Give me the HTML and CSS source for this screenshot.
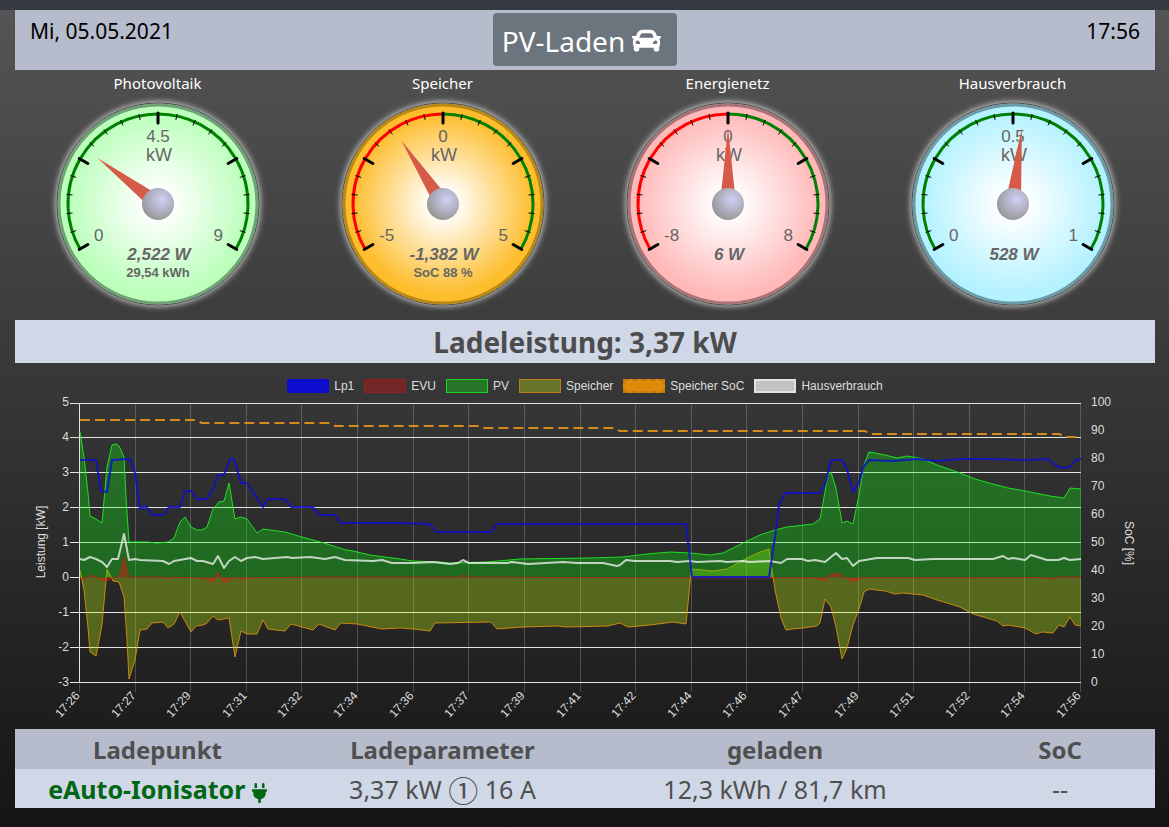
FILE: index.html
```html
<!DOCTYPE html>
<html lang="de">
<head>
<meta charset="utf-8">
<meta name="viewport" content="width=device-width, initial-scale=1">
<title>PV-Laden</title>
<link rel="stylesheet" href="styles.css">
</head>
<body>
<div class="navbar"></div>
<main class="page">
  <header class="topbar">
    <span class="date">Mi, 05.05.2021</span>
    <button type="button" class="mode">PV-Laden
      <svg class="car" viewBox="0 0 512 512" aria-hidden="true"><path d="M499.99 176h-59.87l-16.64-41.6C406.38 91.63 365.57 64 319.5 64h-127c-46.06 0-86.88 27.63-103.99 70.4L71.87 176H12.01C4.2 176-1.53 183.34.37 190.91l6 24C7.7 220.25 12.5 224 18.01 224h20.07C24.65 235.73 16 252.78 16 272v48c0 16.12 6.16 30.67 16 41.93V416c0 17.67 14.33 32 32 32h32c17.67 0 32-14.33 32-32v-32h256v32c0 17.67 14.33 32 32 32h32c17.67 0 32-14.33 32-32v-54.07c9.84-11.25 16-25.8 16-41.93v-48c0-19.22-8.65-36.27-22.07-48H494c5.51 0 10.31-3.75 11.64-9.09l6-24c1.89-7.57-3.84-14.91-11.65-14.91zm-352.06-17.83c7.29-18.22 24.94-30.17 44.57-30.17h127c19.63 0 37.28 11.95 44.57 30.17L384 208H128l19.93-49.83zM96 319.8c-19.2 0-32-12.76-32-31.9S76.8 256 96 256s48 28.71 48 47.85-28.8 15.95-48 15.95zm320 0c-19.2 0-48 3.19-48-15.95S396.8 256 416 256s32 12.76 32 31.9-12.8 31.9-32 31.9z"/></svg>
    </button>
    <span class="time">17:56</span>
  </header>

  <section class="gauges" id="gauges"></section>

  <h1 class="power">Ladeleistung: 3,37 kW</h1>

  <section class="chart">
    <ul class="legend">
      <li><i class="box lp1"></i>Lp1</li>
      <li><i class="box evu"></i>EVU</li>
      <li><i class="box pv"></i>PV</li>
      <li><i class="box speicher"></i>Speicher</li>
      <li><i class="box soc"></i>Speicher SoC</li>
      <li><i class="box haus"></i>Hausverbrauch</li>
    </ul>
    <svg class="plot" id="plot" viewBox="15 393 1140 336" role="img" aria-label="Leistungsverlauf"></svg>
  </section>

  <table class="points">
    <colgroup><col class="c3"><col class="c3"><col class="c4"><col class="c2"></colgroup>
    <thead><tr><th>Ladepunkt</th><th>Ladeparameter</th><th>geladen</th><th>SoC</th></tr></thead>
    <tbody><tr>
      <td class="name">eAuto-Ionisator <svg class="plug" viewBox="0 0 384 512" aria-hidden="true"><path d="M320,32a32,32,0,0,0-64,0v96h64Zm48,128H16A16,16,0,0,0,0,176v32a16,16,0,0,0,16,16H32v32A160.07,160.07,0,0,0,160,412.8V512h64V412.8A160.07,160.07,0,0,0,352,256V224h16a16,16,0,0,0,16-16V176A16,16,0,0,0,368,160ZM128,32a32,32,0,0,0-64,0v96h64Z"/></svg></td>
      <td>3,37 kW <span class="phase">①</span> 16 A</td>
      <td>12,3 kWh / 81,7 km</td>
      <td>--</td>
    </tr></tbody>
  </table>
</main>
<script src="app.js"></script>
</body>
</html>
```

FILE: styles.css
```css
* { box-sizing: border-box; }

body {
  margin: 0;
  min-height: 100vh;
  background: linear-gradient(#555, #151515);
  font-family: "Noto Sans", "Open Sans", sans-serif;
  color: #fff;
}

.navbar { height: 10px; background: #343a40; }
.page { padding: 0 14px 0 15px; }

.topbar {
  display: grid;
  grid-template-columns: 1fr auto 1fr;
  align-items: start;
  height: 60px;
  padding: 3px 15px;
  background: #b6bccc;
  color: #000;
  font-size: 21px;
  line-height: 36px;
}
.time { text-align: right; }
.mode {
  display: flex;
  align-items: center;
  gap: 7px;
  height: 53px;
  padding: 2px 16px 0 9px;
  border: 0;
  border-radius: 4px;
  background: #6c757d;
  color: #fff;
  font-family: inherit;
  font-size: 28px;
}
.car { width: 29px; height: 29px; fill: currentColor; }

.gauges {
  display: grid;
  grid-template-columns: repeat(4, 1fr);
  height: 250px;
}
.gauge { margin: 0; text-align: center; }
.gauge figcaption { font-size: 15px; line-height: 23px; padding-top: 2px; }
.dial { display: block; width: 240px; height: 220px; margin: 0 auto; }
.dial text { font-family: "Liberation Sans", Arial, sans-serif; fill: #666; font-size: 17px; }
.dial .unit { font-size: 18px; }
.dial .value { font-size: 17px; font-weight: bold; font-style: italic; }
.dial .sub { font-size: 13px; font-weight: bold; }
.mid { text-anchor: middle; }

.power {
  margin: 0;
  padding-top: 1px;
  background: #d0d7e7;
  color: #4c4c4c;
  text-align: center;
  font-size: 28px;
  line-height: 42px;
}

.legend {
  display: flex;
  flex-wrap: wrap;
  justify-content: center;
  gap: 10px;
  margin: 0;
  padding: 16px 0 0;
  list-style: none;
  font: 12px/14px "Liberation Sans", Arial, sans-serif;
  color: #ddd;
}
.legend li { display: flex; align-items: center; gap: 5px; }
.box { width: 42px; height: 14px; border: 1px solid; }
.lp1 { background: #0d0dcf; border-color: #0d0dcf; }
.evu { background: #732626; border-color: #941f20; }
.pv { background: #277527; border-color: #1fd422; }
.speicher { background: #67762a; border-color: #b77b17; }
.soc { background: #e08a0a; border: 2px dashed #c27a10; }
.haus { background: #c2c2c2; border: 2px solid #e2e2e2; }

.plot { display: block; width: 100%; height: auto; }
.plot text { font-family: "Liberation Sans", Arial, sans-serif; font-size: 12px; fill: #ddd; }
.plot path { fill: none; stroke-linejoin: round; }
.plot .area { stroke: none; }
.end { text-anchor: end; }
.grid-y { stroke: #e4e4e4; }
.grid-x { stroke: #fff; stroke-opacity: 0.2; }

.points { width: 100%; table-layout: fixed; border-collapse: collapse; color: #4f4f4f; text-align: center; }
.c3 { width: 25%; }
.c4 { width: 33.33%; }
.c2 { width: 16.67%; }
.points th { height: 40px; padding: 2px 0 0; background: #b6bccc; font-size: 24px; line-height: 38px; }
.points td { height: 39px; padding: 2px 0 0; background: #d0d7e7; font-size: 25px; line-height: 37px; }
.points .name { color: #006614; font-weight: bold; }
.plug { width: 15px; height: 20px; fill: currentColor; vertical-align: -4px; }
.phase { font-family: "Noto Sans CJK JP", sans-serif; font-size: 30px; line-height: 1; vertical-align: -3px; }
```

FILE: app.js
```js
const polar = (angle, r) => {
  const a = angle * Math.PI / 180;
  return [(120 + r * Math.sin(a)).toFixed(2), (109 - r * Math.cos(a)).toFixed(2)];
};

const gauges = [
  { title: "Photovoltaik", mid: "4.5", min: "0", max: "9", at: 2.522 / 9, text: "2,522 W", sub: "29,54 kWh", edge: "#bbffbb", ring: "#6fa274", left: "green" },
  { title: "Speicher", mid: "0", min: "-5", max: "5", at: 3.618 / 10, text: "-1,382 W", sub: "SoC 88 %", edge: "#fdbd2c", ring: "#b98815", left: "red" },
  { title: "Energienetz", mid: "0", min: "-8", max: "8", at: 0.5, text: "6 W", sub: "", edge: "#ffb9b9", ring: "#a97477", left: "red" },
  { title: "Hausverbrauch", mid: "0.5", min: "0", max: "1", at: 0.528, text: "528 W", sub: "", edge: "#b4f2ff", ring: "#6a9ba6", left: "green" }
];

function dial(g, i) {
  let ticks = "";
  for (let a = -120; a <= 120; a += 12) {
    if (a % 60 === 0) continue;
    ticks += `<path d="M${polar(a, 92)}L${polar(a, 86)}" stroke="#000" stroke-width="1"/>`;
  }
  for (let a = -120; a <= 120; a += 60) {
    ticks += `<path d="M${polar(a, 91)}L${polar(a, 81)}" stroke="#000" stroke-width="3" stroke-linecap="round"/>`;
  }
  const arc = (from, to, color) =>
    `<path d="M${polar(from, 90)}A90 90 0 0 1 ${polar(to, 90)}" fill="none" stroke="${color}" stroke-width="3"/>`;
  const angle = g.at * 240 - 120;
  return `<figure class="gauge"><figcaption>${g.title}</figcaption>
  <svg class="dial" viewBox="0 0 240 220">
    <defs>
      <radialGradient id="face${i}"><stop offset="0" stop-color="#fff"/><stop offset=".12" stop-color="#fff"/><stop offset=".92" stop-color="${g.edge}"/></radialGradient>
      <radialGradient id="hub${i}" cx=".62" cy=".36" r=".65"><stop offset="0" stop-color="#d0d0f8"/><stop offset="1" stop-color="#989898"/></radialGradient>
      <filter id="glow${i}" x="-10%" y="-10%" width="120%" height="120%"><feGaussianBlur stdDeviation="3"/></filter>
    </defs>
    <circle cx="120" cy="109" r="102" fill="#ddd" filter="url(#glow${i})"/>
    <circle cx="120" cy="109" r="101" fill="#b5b5b5" stroke="#4a4a4a"/>
    <circle cx="120" cy="109" r="99" fill="url(#face${i})" stroke="${g.ring}" stroke-width="3"/>
    ${arc(-120, 0, g.left)}${arc(0, 120, "green")}${ticks}
    <text class="mid" x="120" y="47">${g.mid}</text>
    <text class="mid unit" x="121" y="66">kW</text>
    <text x="56" y="146">${g.min}</text>
    <text class="end" x="185" y="146">${g.max}</text>
    <text class="mid value" x="121" y="165">${g.text}</text>
    <text class="mid sub" x="120" y="182">${g.sub}</text>
    <path d="M112 109L120 33L128 109Z" fill="#d65a48" transform="rotate(${angle.toFixed(1)} 120 109)"/>
    <circle cx="120" cy="109" r="16" fill="url(#hub${i})"/>
  </svg></figure>`;
}
document.getElementById("gauges").innerHTML = gauges.map(dial).join("");

const zero = 577.5;
const series = [
  { name: "soc", stroke: "#d58a1c", width: 2, dash: "10 5",
    points: "80,420 195,420 202,423 329,423 335,426 478,426 484,428 613,428 620,431 865,431 870,434 1059,434 1066,437 1081,437" },
  { name: "speicher", stroke: "rgba(224,148,13,.85)", width: 1, fill: "rgba(200,255,13,.3)",
    points: "80,570 84,590 88,628 90,652 96,656 102,625 107,569 113,581 119,582 124,597 127,640 129,679 135,660 140,630 147,629 152,623 163,622 168,628 174,624 180,612 191,632 196,626 203,625 207,623 213,616 218,620 229,618 235,657 241,631 247,634 257,634 263,620 268,629 285,631 291,624 313,630 319,624 335,630 341,623 357,624 382,629 400,628 413,629 430,631 435,623 491,622 497,629 523,627 557,626 567,627 608,626 620,623 628,627 650,625 673,622 686,624 691,573 692,569 713,571 727,569 747,558 760,552 769,549 771,563 775,590 781,618 786,630 792,629 803,628 817,626 820,623 825,599 831,607 836,627 842,659 847,648 853,625 859,609 864,592 869,589 885,591 895,594 903,593 923,595 937,600 960,607 973,614 980,616 997,621 1003,626 1008,625 1025,628 1036,634 1042,632 1053,633 1059,625 1064,627 1070,617 1075,625 1081,626" },
  { name: "pv", stroke: "rgba(30,240,34,.9)", width: 1, fill: "rgba(10,255,13,.3)",
    points: "80,432 84,457 88,493 90,516 96,519 102,523 107,467 112,445 116,444 119,446 124,457 126,497 129,542 147,542 157,543 168,542 174,538 180,522 185,517 191,527 197,530 202,530 207,527 213,509 219,502 224,501 229,483 235,519 241,517 247,519 257,533 263,529 285,532 302,537 324,543 346,550 353,551 370,555 400,559 413,561 440,562 450,563 487,562 520,559 590,558 623,557 647,554 670,552 690,553 710,555 723,553 747,541 760,535 775,530 787,527 813,524 820,519 825,492 828,474 831,472 836,488 842,523 847,521 853,524 859,495 864,465 869,452 875,453 885,455 897,458 907,456 923,459 937,465 960,473 975,479 993,484 1008,488 1025,491 1050,496 1064,498 1070,488 1081,489" },
  { name: "haus", stroke: "rgba(255,255,255,.72)", width: 2,
    points: "80,559 84,560 90,557 96,559 102,562 107,567 112,559 118,559 124,534 129,560 135,559 140,560 163,561 169,564 174,561 191,558 197,561 203,561 213,564 218,556 224,568 229,561 235,557 241,561 247,558 255,557 263,559 287,557 292,558 310,557 325,559 335,557 345,560 373,561 382,560 392,563 413,563 433,562 450,564 458,563 463,560 469,563 507,563 512,562 528,564 563,562 577,563 603,563 617,566 620,565 626,560 635,561 670,561 677,562 690,561 697,562 720,561 727,562 743,561 750,562 770,561 781,563 787,559 802,559 808,561 815,560 825,562 831,557 836,553 842,559 847,558 853,566 859,561 877,558 908,558 915,560 933,559 970,559 993,559 1003,556 1008,559 1013,558 1025,560 1031,555 1047,560 1058,560 1064,558 1070,560 1081,559" },
  { name: "evu", stroke: "rgba(200,30,20,.65)", width: 1, fill: "rgba(255,10,13,.4)",
    points: "80,578 85,579 90,575 96,577 102,580 107,581 113,578 119,577 124,556 129,577 163,577 169,579 174,577 202,578 213,582 218,572 224,583 235,577 241,580 247,578 310,577 460,577 463,575 468,577 690,578 769,578 815,578 825,581 831,574 839,573 844,577 853,582 861,578 1025,578 1031,577 1053,579 1059,577 1081,577" },
  { name: "lp1", stroke: "rgba(15,15,205,.85)", width: 2,
    points: "80,460 96,460 101,491 107,492 112,460 130,459 135,473 140,509 146,506 152,515 163,515 169,507 180,507 185,491 191,491 197,499 207,499 213,489 218,475 224,475 230,459 234,459 241,483 247,483 263,507 268,499 285,499 291,507 313,507 319,515 335,515 341,523 400,523 430,524 436,532 491,532 497,524 686,524 692,577 769,577 775,537 779,505 785,493 820,493 825,485 831,460 842,460 847,469 853,492 859,482 864,466 869,460 893,461 917,459 937,461 960,459 993,459 1023,460 1048,459 1058,467 1064,468 1070,467 1075,460 1081,459" }
];
const times = ["17:26", "17:27", "17:29", "17:31", "17:32", "17:34", "17:36", "17:37", "17:39", "17:41", "17:42", "17:44", "17:46", "17:47", "17:49", "17:51", "17:52", "17:54", "17:56"];

let out = "";
times.forEach((t, i) => {
  const x = Math.round(79 + i * 1001 / 18) + 0.5;
  out += `<path class="grid-x" d="M${x} 403V692"/>`;
  out += `<text class="end" transform="translate(${x + 1} 696) rotate(-48)">${t}</text>`;
});
for (let v = 5; v >= -3; v--) {
  const y = v === 5 ? 403.5 : zero - v * 35;
  out += `<path class="grid-y" d="M70 ${y}H${v === 0 ? 80 : 1081}"/>`;
  out += `<text class="end" x="69" y="${zero - v * 35 + 3.5}">${v}</text>`;
}
for (let p = 0; p <= 100; p += 10) {
  out += `<text x="1091" y="${686 - p * 2.8}">${p}</text>`;
}
out += `<path class="grid-y" d="M79.5 403V683"/>`;
for (const s of series) {
  if (s.fill) out += `<path class="area" style="fill:${s.fill}" d="M80 ${zero}L${s.points} 1081,${zero}Z"/>`;
  out += `<path d="M${s.points}" stroke="${s.stroke}" stroke-width="${s.width}"${s.dash ? ` stroke-dasharray="${s.dash}"` : ""}/>`;
}
out += `<text class="mid" transform="translate(45 542) rotate(-90)">Leistung [kW]</text>`;
out += `<text class="mid" transform="translate(1125 543) rotate(90)">SoC [%]</text>`;
document.getElementById("plot").innerHTML = out;
```
